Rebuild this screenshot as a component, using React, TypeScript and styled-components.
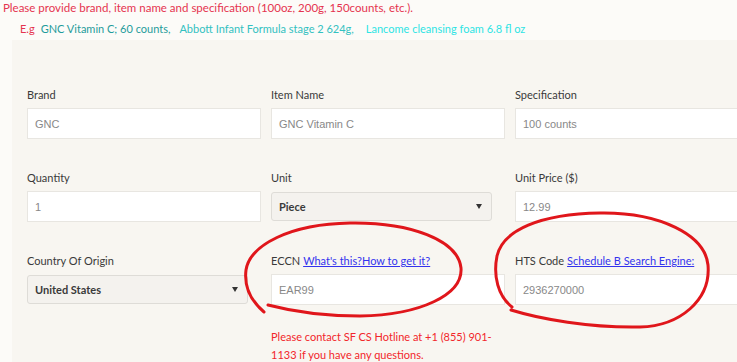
import React from 'react'
import styled, { createGlobalStyle } from 'styled-components'

const GlobalStyle = createGlobalStyle`
  html, body {
    margin: 0;
    padding: 0;
    background: #ffffff;
    font-family: Lato, 'Open Sans', sans-serif;
  }
  body {
    width: 737px;
    height: 362px;
    overflow: hidden;
  }
`

const Page = styled.div`
  position: relative;
  width: 737px;
  height: 362px;
  background: #fcfbf8;
`

const Intro = styled.div`
  height: 40px;
  padding-left: 3px;
  box-sizing: border-box;
`

const IntroLine = styled.div<{ $indent?: number; $size: number; $top?: number }>`
  height: 16px;
  line-height: 16px;
  margin-top: ${p => p.$top ?? 0}px;
  padding-left: ${p => p.$indent ?? 0}px;
  font-size: ${p => p.$size}px;
  white-space: nowrap;
  color: #e5344f;
`

const Sample = styled.span<{ $color: string; $gap?: number }>`
  color: ${p => p.$color};
  margin-left: ${p => p.$gap ?? 0}px;
`

const Panel = styled.div`
  margin-left: 12px;
  height: 322px;
  background: #f8f6f1;
  padding: 48px 0 0 15px;
  box-sizing: border-box;
`

const FormGrid = styled.div`
  display: grid;
  grid-template-columns: repeat(3, 234px);
  column-gap: 10px;
  row-gap: 32px;
`

const Field = styled.div`
  display: flex;
  flex-direction: column;
`

const Label = styled.div`
  height: 14px;
  line-height: 14px;
  margin-bottom: 6px;
  font-size: 11px;
  color: #3a3a3a;
  white-space: nowrap;
`

const HelpLink = styled.a`
  color: #3333ee;
  text-decoration: underline;
  margin-left: 3px;
`

const TextInput = styled.div`
  height: 31px;
  box-sizing: border-box;
  background: #ffffff;
  border: 1px solid #e8e6e1;
  padding-left: 7px;
  display: flex;
  align-items: center;
  font-family: 'Liberation Sans', Arial, sans-serif;
  font-size: 11px;
  color: #888888;
`

const SelectBox = styled.div`
  width: 221px;
  height: 29px;
  margin-top: 1px;
  box-sizing: border-box;
  background: #f4f2ee;
  border: 1px solid #dedcd7;
  border-radius: 3px;
  padding: 0 9px 0 7px;
  display: flex;
  align-items: center;
  justify-content: space-between;
  font-size: 11px;
  font-weight: 700;
  color: #3a3a3a;
`

const Caret = styled.span`
  width: 0;
  height: 0;
  border-left: 3px solid transparent;
  border-right: 3px solid transparent;
  border-top: 5px solid #333333;
`

const Notice = styled.div`
  margin-top: 23px;
  font-size: 11px;
  line-height: 18px;
  color: #f2262b;
`

const Scribble = styled.svg`
  position: absolute;
  left: 0;
  top: 0;
  pointer-events: none;
`

const Select: React.FC<{ value: string }> = ({ value }) => (
  <SelectBox>
    <span>{value}</span>
    <Caret />
  </SelectBox>
)

export default function App() {
  return (
    <Page>
      <GlobalStyle />
      <Intro>
        <IntroLine $size={11.5}>
          Please provide brand, item name and specification (100oz, 200g, 150counts, etc.).
        </IntroLine>
        <IntroLine $size={11} $indent={17} $top={5}>
          E.g
          <Sample $color="#1f9b9b" $gap={6}>GNC Vitamin C; 60 counts,</Sample>
          <Sample $color="#33c1c1" $gap={9}>Abbott Infant Formula stage 2 624g,</Sample>
          <Sample $color="#2ee4e4" $gap={12}>Lancome cleansing foam 6.8 fl oz</Sample>
        </IntroLine>
      </Intro>
      <Panel>
        <FormGrid>
          <Field>
            <Label>Brand</Label>
            <TextInput>GNC</TextInput>
          </Field>
          <Field>
            <Label>Item Name</Label>
            <TextInput>GNC Vitamin C</TextInput>
          </Field>
          <Field>
            <Label>Specification</Label>
            <TextInput>100 counts</TextInput>
          </Field>

          <Field>
            <Label>Quantity</Label>
            <TextInput>1</TextInput>
          </Field>
          <Field>
            <Label>Unit</Label>
            <Select value="Piece" />
          </Field>
          <Field>
            <Label>Unit Price ($)</Label>
            <TextInput>12.99</TextInput>
          </Field>

          <Field>
            <Label>Country Of Origin</Label>
            <Select value="United States" />
          </Field>
          <Field>
            <Label>
              ECCN<HelpLink href="#">What's this?How to get it?</HelpLink>
            </Label>
            <TextInput>EAR99</TextInput>
            <Notice>
              Please contact SF CS Hotline at +1 (855) 901-
              <br />
              1133 if you have any questions.
            </Notice>
          </Field>
          <Field>
            <Label>
              HTS Code<HelpLink href="#">Schedule B Search Engine:</HelpLink>
            </Label>
            <TextInput>2936270000</TextInput>
          </Field>
        </FormGrid>
      </Panel>
      <Scribble width="737" height="362" viewBox="0 0 737 362">
        <g fill="none" stroke="#e0161b" strokeWidth="3" strokeLinecap="round" strokeLinejoin="round">
          <path d="M 264 312 C 250 300, 244 286, 246 270 C 250 245, 290 224, 350 223 C 410 222, 458 240, 461 268 C 463 295, 420 315, 360 316 C 320 316, 287 310, 268 305" />
          <path d="M 512 307 C 498 296, 493 276, 497 256 C 503 230, 540 214, 600 213 C 660 212, 705 235, 708 265 C 711 300, 680 326, 640 327 C 590 328, 540 319, 511 310" />
        </g>
      </Scribble>
    </Page>
  )
}
